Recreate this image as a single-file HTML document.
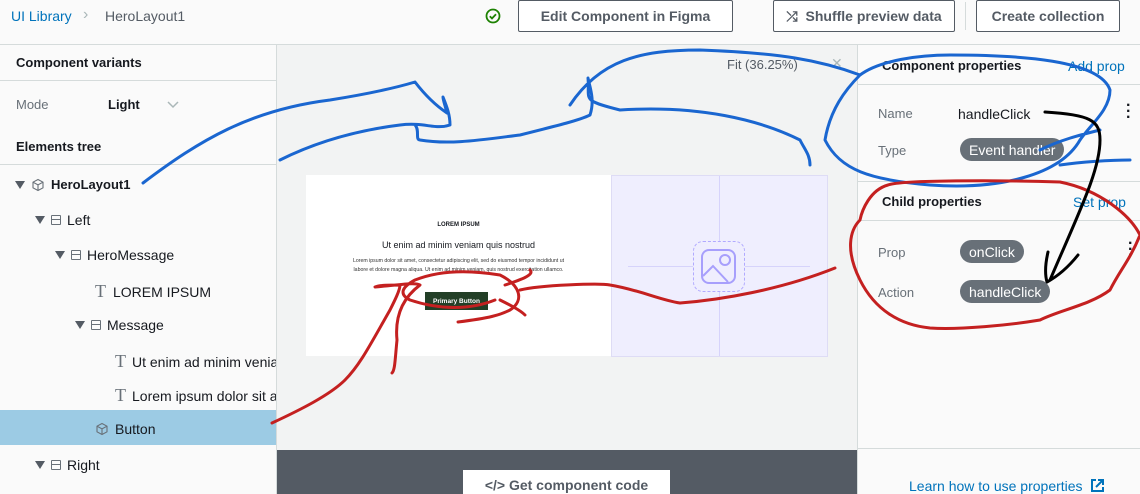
<!DOCTYPE html>
<html><head><meta charset="utf-8"><style>
*{margin:0;padding:0;box-sizing:border-box}
body{width:1140px;height:494px;overflow:hidden;background:#fafafa;font-family:"Liberation Sans","DejaVu Sans",sans-serif;color:#16191f;position:relative;font-size:14px}
.a{position:absolute}
.btn{position:absolute;top:0;height:32px;border:1px solid #545b64;border-radius:2px;background:#fff;font-weight:bold;color:#545b64;font-size:14px;display:flex;align-items:center;justify-content:center}
.hl{position:absolute;height:1px;background:#d5dbdb}
.tr{position:absolute;font-size:14px;color:#16191f;white-space:nowrap;display:flex;align-items:center;gap:6px}
.tri{width:0;height:0;border-left:5px solid transparent;border-right:5px solid transparent;border-top:8px solid #545b64;display:inline-block}
.stk{width:10px;height:10px;border:1.3px solid #687078;border-radius:1px;position:relative;display:inline-block}
.stk:after{content:"";position:absolute;left:0;right:0;top:3px;height:1.3px;background:#687078}
.T{font-family:"Liberation Serif",serif;font-size:18px;color:#687078;width:12px}
.chip{position:absolute;background:#687078;color:#fff;border-radius:12px;height:23px;padding:0 9px;display:flex;align-items:center;font-size:14px}
.lbl{position:absolute;color:#687078;font-size:14px}
.lnk{position:absolute;color:#0073bb;font-size:14px}
</style></head><body>
<!-- top bar -->
<div class="a" style="left:11px;top:8px;color:#0073bb;font-size:14px">UI Library</div>
<div class="a" style="left:83px;top:6px;color:#aab7b8;font-size:16px">&#x203A;</div>
<div class="a" style="left:105px;top:8px;color:#545b64;font-size:14px">HeroLayout1</div>
<svg class="a" style="left:485px;top:8px" width="16" height="16"><circle cx="8" cy="8" r="6.5" fill="none" stroke="#1d8102" stroke-width="1.8"/><path d="M4.8 8.2l2.2 2.2 4-4.2" fill="none" stroke="#1d8102" stroke-width="1.8"/></svg>
<div class="btn" style="left:518px;width:215px">Edit Component in Figma</div>
<div class="btn" style="left:773px;width:182px"><span style="margin-right:8px;font-size:14px">&#x292E;</span>Shuffle preview data</div>
<div class="a" style="left:965px;top:2px;width:1px;height:28px;background:#d5dbdb"></div>
<div class="btn" style="left:976px;width:144px">Create collection</div>
<div class="hl" style="left:0;top:44px;width:1140px"></div>

<!-- left panel -->
<div class="a" style="left:276px;top:45px;width:1px;height:449px;background:#d5dbdb"></div>
<div class="a" style="left:16px;top:55px;font-weight:bold;font-size:13px">Component variants</div>
<div class="hl" style="left:0;top:80px;width:276px"></div>
<div class="lbl" style="left:16px;top:97px;font-size:13px">Mode</div>
<div class="a" style="left:108px;top:97px;font-weight:bold;font-size:13px">Light</div>
<svg class="a" style="left:166px;top:100px" width="14" height="10"><path d="M2 2l5 5 5-5" fill="none" stroke="#aab7b8" stroke-width="1.5"/></svg>
<div class="a" style="left:16px;top:139px;font-weight:bold;font-size:13px">Elements tree</div>
<div class="hl" style="left:0;top:164px;width:276px"></div>
<div class="a" style="left:0;top:410px;width:276px;height:35px;background:#9ccbe4"></div>
<div class="tr" style="left:15px;top:177px"><span class="tri"></span><svg width="14" height="14"><path d="M7 1.5l5 2.7v5.6L7 12.5 2 9.8V4.2z M2 4.2l5 2.7 5-2.7 M7 6.9v5.6" fill="none" stroke="#687078" stroke-width="1.1"/></svg><b style="font-size:13px">HeroLayout1</b></div>
<div class="tr" style="left:35px;top:212px"><span class="tri"></span><span class="stk"></span>Left</div>
<div class="tr" style="left:55px;top:247px"><span class="tri"></span><span class="stk"></span>HeroMessage</div>
<div class="tr" style="left:95px;top:281px"><span class="T">T</span>LOREM IPSUM</div>
<div class="tr" style="left:75px;top:317px"><span class="tri"></span><span class="stk"></span>Message</div>
<div class="tr" style="left:115px;top:351px;width:161px;overflow:hidden"><span class="T">T</span>Ut enim ad minim veniam</div>
<div class="tr" style="left:115px;top:385px;width:161px;overflow:hidden"><span class="T">T</span>Lorem ipsum dolor sit amet</div>
<div class="tr" style="left:95px;top:421px"><svg width="14" height="14"><path d="M7 1.5l5 2.7v5.6L7 12.5 2 9.8V4.2z M2 4.2l5 2.7 5-2.7 M7 6.9v5.6" fill="none" stroke="#687078" stroke-width="1.1"/></svg>Button</div>
<div class="tr" style="left:35px;top:457px"><span class="tri"></span><span class="stk"></span>Right</div>

<!-- center -->
<div class="a" style="left:277px;top:45px;width:580px;height:405px;background:#f2f3f3"></div>
<div class="a" style="left:727px;top:57px;color:#545b64;font-size:13px">Fit (36.25%)</div>
<div class="a" style="left:831px;top:55px;color:#aab7b8;font-size:14px">&#x2715;</div>
<div class="a" style="left:306px;top:175px;width:305px;height:181px;background:#fff"></div>
<div class="a" style="left:306px;top:222px;width:305px;text-align:center;font-size:6px;font-weight:bold">LOREM IPSUM</div>
<div class="a" style="left:306px;top:240px;width:305px;text-align:center;font-size:9px">Ut enim ad minim veniam quis nostrud</div>
<div class="a" style="left:346px;top:257px;width:225px;text-align:center;font-size:5.2px;line-height:9px;color:#333">Lorem ipsum dolor sit amet, consectetur adipiscing elit, sed do eiusmod tempor incididunt ut labore et dolore magna aliqua. Ut enim ad minim veniam, quis nostrud exercitation ullamco.</div>
<div class="a" style="left:425px;top:292px;width:63px;height:18px;background:#233f27;color:#fff;font-size:6.5px;font-weight:bold;display:flex;align-items:center;justify-content:center">Primary Button</div>
<div class="a" style="left:611px;top:175px;width:217px;height:182px;background:#efeefe;border:1px solid #dedcf5"></div>
<div class="a" style="left:719px;top:176px;width:1px;height:180px;background:#d6d3fb"></div>
<div class="a" style="left:628px;top:266px;width:182px;height:1px;background:#d6d3fb"></div>
<div class="a" style="left:693px;top:241px;width:52px;height:51px;background:#efeefe;border:1.5px dashed #b1aaff;border-radius:10px"></div>
<svg class="a" style="left:700px;top:248px" width="38" height="38"><rect x="2" y="2" width="33" height="33" rx="7" fill="none" stroke="#a79ffc" stroke-width="2"/><circle cx="25" cy="12" r="5" fill="none" stroke="#a79ffc" stroke-width="2"/><path d="M3 28l10-10 15 16" fill="none" stroke="#a79ffc" stroke-width="2"/></svg>
<div class="a" style="left:277px;top:450px;width:580px;height:44px;background:#545b64"></div>
<div class="a" style="left:463px;top:470px;width:207px;height:24px;background:#fff;color:#545b64;font-weight:bold;font-size:14px;text-align:center;padding-top:7px">&lt;/&gt; Get component code</div>

<!-- right panel -->
<div class="a" style="left:857px;top:45px;width:1px;height:449px;background:#d5dbdb"></div>
<div class="a" style="left:882px;top:58px;font-weight:bold;font-size:13px">Component properties</div>
<div class="lnk" style="left:1068px;top:58px">Add prop</div>
<div class="hl" style="left:858px;top:84px;width:282px"></div>
<div class="lbl" style="left:878px;top:106px;font-size:13px">Name</div>
<div class="a" style="left:958px;top:106px;font-size:14px">handleClick</div>
<div class="a" style="left:1126px;top:103px;font-size:16px;line-height:6px;font-weight:bold">·<br>·<br>·</div>
<div class="lbl" style="left:878px;top:143px;font-size:13px">Type</div>
<div class="chip" style="left:960px;top:138px">Event handler</div>
<div class="hl" style="left:858px;top:181px;width:282px"></div>
<div class="a" style="left:882px;top:194px;font-weight:bold;font-size:13px">Child properties</div>
<div class="lnk" style="left:1073px;top:194px">Set prop</div>
<div class="hl" style="left:858px;top:220px;width:282px"></div>
<div class="lbl" style="left:878px;top:245px;font-size:13px">Prop</div>
<div class="chip" style="left:960px;top:240px">onClick</div>
<div class="a" style="left:1128px;top:241px;font-size:16px;line-height:6px;font-weight:bold">·<br>·<br>·</div>
<div class="lbl" style="left:878px;top:285px;font-size:13px">Action</div>
<div class="chip" style="left:960px;top:280px">handleClick</div>
<div class="hl" style="left:858px;top:448px;width:282px"></div>
<div class="lnk" style="left:909px;top:478px">Learn how to use properties</div>
<svg class="a" style="left:1090px;top:478px" width="15" height="15"><path d="M6 2H2v11h11V9 M8 2h5v5 M13 2L6 9" fill="none" stroke="#0073bb" stroke-width="2"/></svg>

<!-- annotations -->
<svg class="a" style="left:0;top:0" width="1140" height="494">
<g fill="none" stroke-linecap="round" stroke-linejoin="round" stroke-width="3">
<path stroke="#1a66d0" d="M143 183C200 140 250 110 330 100C380 92 405 85 415 82C425 95 435 105 447 113C445 105 443 100 443 97C447 107 450 115 450 125C435 130 425 122 400 125C360 130 320 140 280 160 M415 125C420 130 415 140 420 140C450 145 480 140 520 135C560 125 580 120 590 115C595 100 590 88 588 78C590 100 580 100 620 110C700 105 760 120 800 140C805 150 810 155 810 165 M570 105C600 60 640 50 700 50C780 53 820 60 860 75C845 90 830 110 825 140C840 170 870 180 930 185C1000 190 1060 175 1080 140C1090 125 1110 110 1110 90C1100 60 1020 55 950 55C920 55 880 60 860 75 M1040 150C1060 140 1080 135 1100 130 M1060 165C1080 162 1110 160 1130 160"/>
<path stroke="#c42020" d="M272 423C300 410 330 395 345 380C360 365 370 345 390 310C395 300 400 290 400 285C390 285 380 285 375 287C400 285 415 282 420 285C400 300 395 320 397 340C395 360 395 370 392 373 M495 300C470 310 440 310 410 300C400 295 400 288 415 280C440 270 470 270 500 275C520 285 525 300 510 310C500 315 490 318 458 322 M520 290C540 285 600 283 610 285C640 290 660 300 680 303C720 300 780 290 835 268 M505 285C520 280 535 275 530 270 M500 300C510 305 520 310 525 315 M888 185C900 180 1000 180 1060 182C1100 190 1130 215 1140 235C1130 260 1120 270 1110 290C1090 305 1060 310 1040 320C1010 325 960 330 930 328C900 325 875 310 860 280C845 250 850 230 860 220C862 210 870 190 888 185"/>
<path stroke="#000" d="M1045 112C1090 115 1100 120 1100 140C1100 170 1080 210 1050 280 M1048 252C1045 265 1045 275 1047 282C1060 275 1070 265 1078 255"/>
</g></svg>
</body></html>
